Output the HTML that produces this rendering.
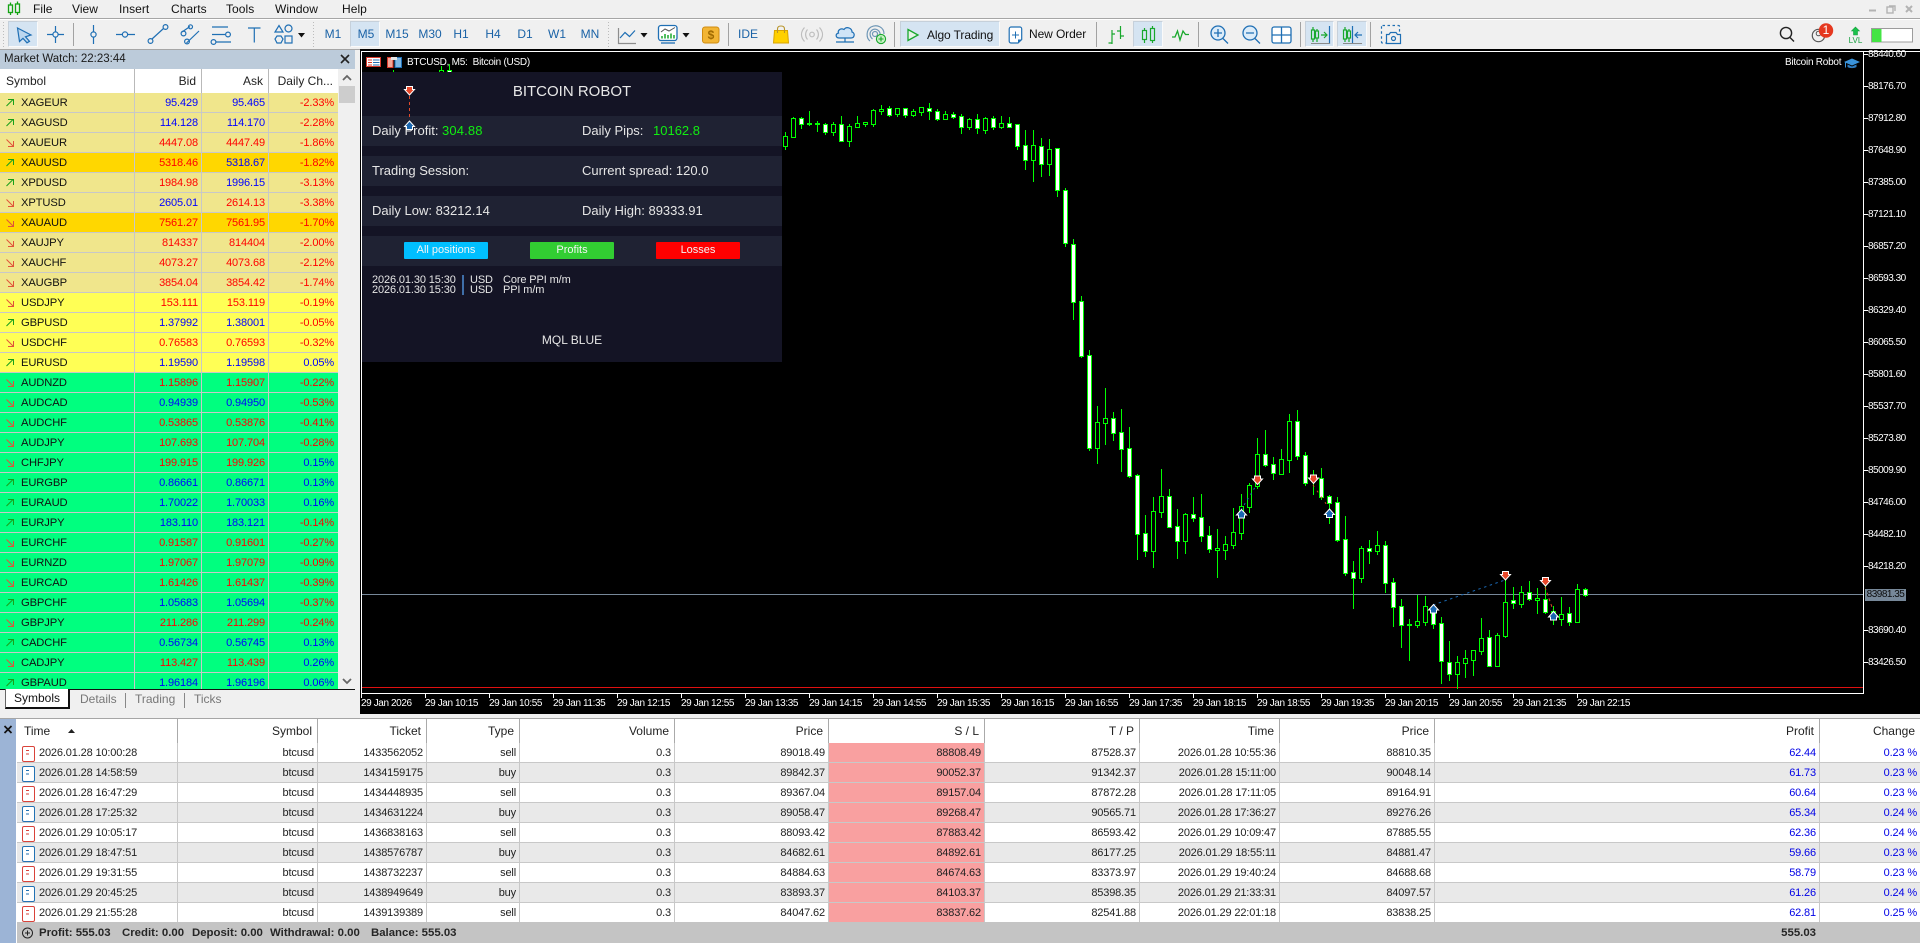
<!DOCTYPE html>
<html>
<head>
<meta charset="utf-8">
<title>MT5 Bitcoin Robot</title>
<style>
html,body{margin:0;padding:0;background:#f0f0f0}
body{position:relative;width:1920px;height:943px;overflow:hidden;font-family:"Liberation Sans",Arial,sans-serif;color:#111}
div,span{box-sizing:border-box}
.abs,.t,.tf{position:absolute;white-space:nowrap}
svg{position:absolute;left:0;top:0;display:block}
.t{font-size:12px;line-height:16px}
.menu{top:1px;font-size:12px;letter-spacing:.05px;color:#111}
.tf{top:26px;width:30px;height:16px;text-align:center;font-size:12px;line-height:16px;color:#1a62a6}
.sel{position:absolute;background:#d5e4f2;border:1px solid #c6d0da;border-right-color:#fafafa;border-bottom-color:#fafafa}
.mh{position:absolute;top:69px;height:24px;background:#fff;border-right:1px solid #b9b9b9;font-size:12px;line-height:24px;color:#222}
.m{position:absolute;left:0;width:338px;height:20px;display:flex;font-size:11px;line-height:21px;letter-spacing:-.12px;border-bottom:1px solid #c8c8c8}
.m span{display:block;height:19px;border-right:1px solid #c8c8c8;text-align:right;padding-right:3px;width:67px;color:#00f}
.m span:nth-of-type(1){width:135px;text-align:left;padding-left:21px;color:#111;font-size:11.2px}
.m span:nth-of-type(4){width:69px;border-right:0;padding-right:4px}
.m span.r{color:#f00}
.k{background:#f0e68c}.g{background:#ffd700}.y{background:#ffff55}.s{background:#00ff7f}
.m svg{width:20px;height:20px;z-index:2}
.ax{position:absolute;color:#fff;font-size:10px;line-height:12px;white-space:nowrap}
.tx{top:698px;letter-spacing:-.4px}
.px{left:1868px;letter-spacing:-.5px}
.row{position:absolute;left:17px;width:1903px;height:20px;display:flex;font-size:11px;line-height:21px;letter-spacing:-.15px;color:#222;border-bottom:1px solid #c8c8c8}
.row span,.hd span{display:block;border-right:1px solid #c8c8c8;text-align:right;padding-right:3px;height:19px}
.hd{position:absolute;left:17px;top:719px;width:1903px;height:24px;display:flex;background:#fff;font-size:12px;line-height:24px;color:#222}
.hd span{height:24px;border-right:1px solid #aaa;padding-right:5px}
.c1{width:161px}.c2{width:140px}.c3{width:109px}.c4{width:93px}.c5{width:155px}.c6{width:154px}.c7{width:156px}.c8{width:155px}.c9{width:140px}.c10{width:155px}.c11{width:385px}.c12{width:100px}
.row span.c12{border-right:0}.hd span.c12{border-right:0}
.row span.c1{text-align:left;padding-left:22px}
.hd span.c1{text-align:left;padding-left:7px}
.row span.c6{background:#f9a0a0}
.row span.c11,.row span.c12{color:#0000e6}
.alt{background:#e9e9e9}.wh{background:#fff}
.ic{position:absolute;left:5px;top:3px;width:11px;height:14px;border:1.2px solid #d9433a;border-radius:2px;background:#fff}
.ic.bu{border-color:#2272b4}
.ic:before{content:"";position:absolute;left:3px;top:2.5px;width:3px;height:1.5px;background:currentColor;box-shadow:0 3.5px 0 currentColor}
.ic.se{color:#d9433a}.ic.bu{color:#2272b4}
.sm{position:absolute;top:923px;font-size:11.4px;font-weight:bold;line-height:20px;color:#262626;white-space:nowrap}
.pl{position:absolute;color:#e6e6e6;font-size:13px;line-height:18px;white-space:nowrap}
.bar{position:absolute;left:362px;width:420px;height:30px;background:#1f2233}
.btn{position:absolute;top:242px;width:84px;height:17px;border-radius:1px;text-align:center;font-size:11px;line-height:17px;color:#f4f4f4}
.nw{position:absolute;color:#e6e6e6;font-size:11px;line-height:13px;letter-spacing:-.12px;white-space:nowrap}
</style>
</head>
<body>

<!-- top menu -->
<div class="abs" style="left:0;top:0;width:1920px;height:18px;background:#f0f0f0"></div>
<div class="abs" style="left:0;top:18px;width:1920px;height:1px;background:#a6a6a6"></div>
<div class="abs" style="left:0;top:19px;width:1920px;height:1px;background:#fff"></div>
<div class="t menu" style="left:33px">File</div>
<div class="t menu" style="left:72px">View</div>
<div class="t menu" style="left:119px">Insert</div>
<div class="t menu" style="left:171px">Charts</div>
<div class="t menu" style="left:226px">Tools</div>
<div class="t menu" style="left:275px">Window</div>
<div class="t menu" style="left:342px">Help</div>

<!-- toolbar -->
<div class="sel" style="left:8px;top:21px;width:30px;height:26px"></div>
<div class="sel" style="left:350px;top:21px;width:30px;height:26px"></div>
<div class="sel" style="left:900px;top:21px;width:100px;height:26px"></div>
<div class="sel" style="left:1133px;top:21px;width:30px;height:26px"></div>
<div class="sel" style="left:1305px;top:21px;width:29px;height:26px"></div>
<div class="sel" style="left:1337px;top:21px;width:30px;height:26px"></div>

<div class="tf" style="left:318px">M1</div>
<div class="tf" style="left:351px">M5</div>
<div class="tf" style="left:382px">M15</div>
<div class="tf" style="left:415px">M30</div>
<div class="tf" style="left:446px">H1</div>
<div class="tf" style="left:478px">H4</div>
<div class="tf" style="left:510px">D1</div>
<div class="tf" style="left:542px">W1</div>
<div class="tf" style="left:575px">MN</div>
<div class="tf" style="left:733px">IDE</div>
<div class="t" style="left:927px;top:27px;color:#111;letter-spacing:-.1px">Algo Trading</div>
<div class="t" style="left:1029px;top:26px;color:#111;letter-spacing:-.1px">New Order</div>

<svg width="1920" height="50" viewBox="0 0 1920 50" fill="none" style="z-index:3">
  <!-- logo -->
  <g stroke="#12a312" stroke-width="1.3"><path d="M10.5 2.5V15M17.5 1.5V15"/><rect x="8.5" y="5" width="4" height="7.5" fill="#f0f0f0"/><rect x="15.5" y="4" width="4" height="8.5" fill="#f0f0f0"/></g>
  <!-- grip / separators -->
  <g stroke="#bcbcbc" stroke-width="1" stroke-dasharray="1 2"><path d="M3.5 22V47M313.5 22V47M608.5 22V47"/></g>
  <g stroke="#a2a2a2" stroke-width="1"><path d="M73.5 23V46M728.5 23V46M894.5 22V47M1096.5 22V47M1198.5 22V47M1300.5 22V47M1370.5 22V47"/></g>
  <!-- cursor -->
  <path d="M17.5 28L31 35L25.5 36.8L29.5 41.3L27 42.8L23 38.3L19.5 41.5Z" fill="#bcd7ef" stroke="#1f6fb4" stroke-width="1.2"/>
  <!-- crosshair etc -->
  <g stroke="#1f6fb4" stroke-width="1.2">
    <path d="M47 34.5H52.5M58.5 34.5H64M55.5 26V31.5M55.5 37.5V43"/><circle cx="55.5" cy="34.5" r="2.6"/>
    <path d="M93.5 25V31.5M93.5 37V44"/><circle cx="93.5" cy="34.5" r="2.6"/>
    <path d="M116 34.5H122.3M127.7 34.5H135"/><circle cx="125" cy="34.5" r="2.6"/>
    <path d="M152 39L163.5 28.5"/><circle cx="150.5" cy="41" r="2.4"/><circle cx="165.5" cy="27" r="2.4"/>
    <path d="M182 32L190 26.5M186.5 43L199 31"/><circle cx="183.5" cy="33.5" r="2.4"/><circle cx="187" cy="41.5" r="2.4"/><circle cx="190.5" cy="26.8" r="2"/>
    <path d="M212 27H228M212 34.5H225M216 42H231"/><circle cx="228" cy="34.5" r="2.4"/><circle cx="213.5" cy="42" r="2.4"/>
    <path d="M248 28H260.5M254.3 28V42.5"/>
    <path d="M275 32H283L279 25.5Z"/><circle cx="288.5" cy="28.5" r="3.5"/><path d="M277 36H281L283 39L281 43H277L275 39Z"/><rect x="285" y="36" width="7" height="7"/>
  </g>
  <g fill="#111">
    <path d="M298 33H305L301.5 37.5Z"/><path d="M640.5 33H647.5L644 37.5Z"/><path d="M682.5 33H689.5L686 37.5Z"/>
  </g>
  <!-- line chart type -->
  <g stroke-width="1.2"><path d="M618.5 28V43.5H636" stroke="#8d8d8d"/><path d="M620 38L625 32.5L629.5 36.5L635 30.5" stroke="#1f6fb4"/></g>
  <!-- indicators -->
  <rect x="658.5" y="25.5" width="18.5" height="15" rx="2.5" stroke="#1f6fb4" stroke-width="1.3" fill="#fff"/>
  <path d="M661 43H675" stroke="#1f6fb4" stroke-width="1.3"/>
  <path d="M661 32L665 29L669 31L675 27.5" stroke="#555" stroke-width="1"/>
  <path d="M662 38.5V36M665 38.5V34M668 38.5V35M671 38.5V33.5M674 38.5V35" stroke="#18a82c" stroke-width="1.5"/>
  <!-- dollar -->
  <rect x="702.5" y="27" width="16.5" height="16" rx="2.5" fill="#f2b534" stroke="#d08c10"/>
  <!-- bag -->
  <path d="M774.5 30.5H787.5L788.5 43H773.5Z" fill="#ffd000" stroke="#d9a400"/>
  <path d="M777.5 33V29C777.5 27 779 26 781 26C783 26 784.5 27 784.5 29V33" stroke="#b8952c" stroke-width="1.1"/>
  <!-- signal -->
  <g stroke="#bdbdbd" stroke-width="1.2"><circle cx="812" cy="34.5" r="2.3"/><path d="M807.5 29.5C805 32.5 805 36.5 807.5 39.5M816.5 29.5C819 32.5 819 36.5 816.5 39.5M804.5 27.5C800.5 32 800.5 37 804.5 41.5M819.5 27.5C823.5 32 823.5 37 819.5 41.5"/></g>
  <!-- cloud -->
  <g stroke="#1f6fb4" stroke-width="1.2"><path d="M839.5 38H851C854.5 38 855.5 33 852 32C852 28 846.5 26 844 29.5C840 27.5 837.5 31 838.5 33C835 34 835.5 38 839.5 38Z" fill="#cfe4f7"/><path d="M845 38V42M836 42H854"/></g>
  <!-- vps -->
  <g stroke="#6f97b6" stroke-width="1.2"><circle cx="875" cy="34" r="2.5"/><path d="M880 36C881 30 875 27.5 871.5 30.5C869 33 870 37 872.5 39M884 34C884 27 877 24 871 27C866 30 866 38 870 41"/></g>
  <circle cx="881" cy="39" r="4.6" fill="#c8f0c4" stroke="#18a82c" stroke-width="1.1"/><path d="M878.5 39H883.5M881 36.5V41.5" stroke="#18a82c" stroke-width="1.1"/>
  <!-- algo / new order -->
  <path d="M908 29.5L918 35L908 40.5Z" stroke="#18a82c" stroke-width="1.3" fill="#e6f3e6"/>
  <path d="M1018 43H1011C1009.8 43 1009.2 42 1009.2 41V29C1009.2 28 1010 27 1011 27H1020C1021 27 1021.7 28 1021.7 29V39.5L1018 43Z" stroke="#1f6fb4" stroke-width="1.2" fill="#fff"/>
  <path d="M1012 35H1019M1015.5 31.5V38.5" stroke="#1f6fb4" stroke-width="1"/>
  <path d="M1018 43V39.5H1021.7" fill="#1f6fb4"/>
  <!-- bars -->
  <g stroke="#18a82c" stroke-width="1.2"><path d="M1112 30V44M1108.5 43H1112M1112 34H1115M1120.5 26V39M1117 31H1120.5M1120.5 36H1124"/></g>
  <!-- candles -->
  <g stroke="#18a82c" stroke-width="1.2"><path d="M1144.5 28V43M1152.5 26V43"/><rect x="1142.5" y="30.5" width="4" height="9" fill="#d5e4f2"/><rect x="1150.5" y="28.5" width="4" height="12" fill="#d5e4f2"/></g>
  <!-- line -->
  <path d="M1172 37H1175L1177.5 31L1180 40L1183 31L1185.5 34.5H1189" stroke="#18a82c" stroke-width="1.3"/>
  <!-- zoom -->
  <g stroke="#1f6fb4" stroke-width="1.3"><circle cx="1218" cy="33" r="7" fill="#dcecf9"/><path d="M1214 33H1222M1218 29V37M1223 38.5L1228 43.5"/><circle cx="1250" cy="33" r="7" fill="#dcecf9"/><path d="M1246 33H1254M1255 38.5L1260 43.5"/></g>
  <!-- grid -->
  <g stroke="#1f6fb4" stroke-width="1.3"><rect x="1272" y="27" width="19" height="16" rx="2" fill="#fff"/><path d="M1281.5 27V43M1272 35H1291"/></g>
  <!-- autoscroll -->
  <g stroke="#18a82c" stroke-width="1.2"><path d="M1313 27V42M1317 29V42"/><rect x="1311.5" y="30" width="3" height="9" fill="#d5e4f2"/><rect x="1315.5" y="31" width="3" height="7" fill="#d5e4f2"/><path d="M1321 35H1327M1324 32L1327 35L1324 38"/></g>
  <path d="M1329.5 26V44" stroke="#1f6fb4" stroke-width="1.2"/>
  <path d="M1311 43.5H1330" stroke="#8a8a8a"/>
  <g stroke="#18a82c" stroke-width="1.2"><path d="M1345 27V42M1349 29V42"/><rect x="1343.5" y="30" width="3" height="9" fill="#d5e4f2"/><rect x="1347.5" y="31" width="3" height="7" fill="#d5e4f2"/></g>
  <path d="M1352.5 26V44M1355 35H1362M1358 32L1355 35L1358 38" stroke="#1f6fb4" stroke-width="1.2"/>
  <path d="M1343 43.5H1362" stroke="#8a8a8a"/>
  <!-- screenshot -->
  <rect x="1381.5" y="25.5" width="18" height="17.5" rx="1" stroke="#1f6fb4" stroke-width="1.2" stroke-dasharray="2.5 2.5"/>
  <path d="M1386.500 34.500H1389L1390.500 32.500H1396L1397.500 34.500H1400.500V43.500H1386.500Z" fill="#f0f0f0" stroke="#1f6fb4" stroke-width="1.2"/>
  <circle cx="1393.500" cy="38.500" r="2" stroke="#1f6fb4" stroke-width="1.2"/>
  <!-- right icons -->
  <g stroke="#222" stroke-width="1.4"><circle cx="1786" cy="33" r="5.6"/><path d="M1790 37.5L1794 41.5"/></g>
  <circle cx="1818.5" cy="35.5" r="6.2" stroke="#555" stroke-width="1.2"/><circle cx="1818.5" cy="33.5" r="2.3" stroke="#555"/>
  <circle cx="1826" cy="30.5" r="7.2" fill="#e5381f"/>
  <path d="M1855.5 27L1851.5 31H1853.5V35H1857.5V31H1859.5Z" fill="#19c24a" stroke="#19a040" stroke-width=".6"/>
  <rect x="1871.5" y="28.5" width="41" height="13.5" fill="#fff" stroke="#9c9c9c"/>
  <rect x="1872" y="29" width="9.5" height="13" fill="#44e444"/>
  <!-- window buttons -->
  <g stroke="#b3b3b3" stroke-width="2"><path d="M1869 10.5H1876"/></g>
  <g stroke="#b3b3b3" stroke-width="1.4"><rect x="1887" y="7" width="6" height="6"/><path d="M1889 6H1895V11"/><path d="M1906 6L1912 12M1912 6L1906 12" stroke-width="2"/></g>
</svg>
<div class="abs" style="left:1822px;top:23px;width:8px;font-size:12px;line-height:15px;color:#fff;text-align:center;z-index:4">1</div>
<div class="abs" style="left:1846px;top:36px;width:19px;font-size:8px;line-height:9px;color:#19a040;text-align:center;z-index:4">LVL</div>
<div class="abs" style="left:703px;top:27px;width:16px;text-align:center;font-size:12px;font-weight:bold;line-height:16px;color:#a06a00;z-index:4">$</div>

<div class="abs" style="left:0;top:49px;width:360px;height:1px;background:#a6a6a6"></div>

<!-- market watch -->
<div class="abs" style="left:0;top:50px;width:355px;height:19px;background:#bccbda;font-size:11.5px;line-height:18px;padding-left:4px;color:#1a1a1a">Market Watch: 22:23:44</div>
<svg width="360" height="70" viewBox="0 0 360 70" fill="none" style="z-index:3;top:0"><path d="M341 55L349 63M349 55L341 63" stroke="#222" stroke-width="1.6"/></svg>
<div class="mh" style="left:0;width:135px;padding-left:6px">Symbol</div>
<div class="mh" style="left:135px;width:67px;text-align:right;padding-right:5px">Bid</div>
<div class="mh" style="left:202px;width:67px;text-align:right;padding-right:5px">Ask</div>
<div class="mh" style="left:269px;width:69px;text-align:right;padding-right:5px;border-right:0;overflow:hidden">Daily Ch...</div>

<div class="abs" style="left:0;top:93px;width:338px;height:596px;overflow:hidden;background:#fff">
<svg width="0" height="0" style="position:absolute"><defs>
<g id="u" fill="none" stroke="#1aa01a" stroke-width="1"><path d="M6.5 13L13 6.5M8 6.5H13.5V12"/></g>
<g id="d" fill="none" stroke="#e0533a" stroke-width="1"><path d="M6.5 6.5L13 13M13.5 8V13.5H8"/></g>
</defs></svg>
<div class="m k" style="top:0"><svg><use href="#u"/></svg><span>XAGEUR</span><span>95.429</span><span>95.465</span><span class="r">-2.33%</span></div>
<div class="m k" style="top:20px"><svg><use href="#u"/></svg><span>XAGUSD</span><span>114.128</span><span>114.170</span><span class="r">-2.28%</span></div>
<div class="m k" style="top:40px"><svg><use href="#d"/></svg><span>XAUEUR</span><span class="r">4447.08</span><span class="r">4447.49</span><span class="r">-1.86%</span></div>
<div class="m g" style="top:60px"><svg><use href="#u"/></svg><span>XAUUSD</span><span class="r">5318.46</span><span>5318.67</span><span class="r">-1.82%</span></div>
<div class="m k" style="top:80px"><svg><use href="#u"/></svg><span>XPDUSD</span><span class="r">1984.98</span><span>1996.15</span><span class="r">-3.13%</span></div>
<div class="m k" style="top:100px"><svg><use href="#d"/></svg><span>XPTUSD</span><span>2605.01</span><span class="r">2614.13</span><span class="r">-3.38%</span></div>
<div class="m g" style="top:120px"><svg><use href="#d"/></svg><span>XAUAUD</span><span class="r">7561.27</span><span class="r">7561.95</span><span class="r">-1.70%</span></div>
<div class="m k" style="top:140px"><svg><use href="#d"/></svg><span>XAUJPY</span><span class="r">814337</span><span class="r">814404</span><span class="r">-2.00%</span></div>
<div class="m k" style="top:160px"><svg><use href="#d"/></svg><span>XAUCHF</span><span class="r">4073.27</span><span class="r">4073.68</span><span class="r">-2.12%</span></div>
<div class="m k" style="top:180px"><svg><use href="#d"/></svg><span>XAUGBP</span><span class="r">3854.04</span><span class="r">3854.42</span><span class="r">-1.74%</span></div>
<div class="m y" style="top:200px"><svg><use href="#d"/></svg><span>USDJPY</span><span class="r">153.111</span><span class="r">153.119</span><span class="r">-0.19%</span></div>
<div class="m y" style="top:220px"><svg><use href="#u"/></svg><span>GBPUSD</span><span>1.37992</span><span>1.38001</span><span class="r">-0.05%</span></div>
<div class="m y" style="top:240px"><svg><use href="#d"/></svg><span>USDCHF</span><span class="r">0.76583</span><span class="r">0.76593</span><span class="r">-0.32%</span></div>
<div class="m y" style="top:260px"><svg><use href="#u"/></svg><span>EURUSD</span><span>1.19590</span><span>1.19598</span><span>0.05%</span></div>
<div class="m s" style="top:280px"><svg><use href="#d"/></svg><span>AUDNZD</span><span class="r">1.15896</span><span class="r">1.15907</span><span class="r">-0.22%</span></div>
<div class="m s" style="top:300px"><svg><use href="#d"/></svg><span>AUDCAD</span><span>0.94939</span><span>0.94950</span><span class="r">-0.53%</span></div>
<div class="m s" style="top:320px"><svg><use href="#d"/></svg><span>AUDCHF</span><span class="r">0.53865</span><span class="r">0.53876</span><span class="r">-0.41%</span></div>
<div class="m s" style="top:340px"><svg><use href="#d"/></svg><span>AUDJPY</span><span class="r">107.693</span><span class="r">107.704</span><span class="r">-0.28%</span></div>
<div class="m s" style="top:360px"><svg><use href="#d"/></svg><span>CHFJPY</span><span class="r">199.915</span><span class="r">199.926</span><span>0.15%</span></div>
<div class="m s" style="top:380px"><svg><use href="#u"/></svg><span>EURGBP</span><span>0.86661</span><span>0.86671</span><span>0.13%</span></div>
<div class="m s" style="top:400px"><svg><use href="#u"/></svg><span>EURAUD</span><span>1.70022</span><span>1.70033</span><span>0.16%</span></div>
<div class="m s" style="top:420px"><svg><use href="#u"/></svg><span>EURJPY</span><span>183.110</span><span>183.121</span><span class="r">-0.14%</span></div>
<div class="m s" style="top:440px"><svg><use href="#d"/></svg><span>EURCHF</span><span class="r">0.91587</span><span class="r">0.91601</span><span class="r">-0.27%</span></div>
<div class="m s" style="top:460px"><svg><use href="#d"/></svg><span>EURNZD</span><span class="r">1.97067</span><span class="r">1.97079</span><span class="r">-0.09%</span></div>
<div class="m s" style="top:480px"><svg><use href="#d"/></svg><span>EURCAD</span><span class="r">1.61426</span><span class="r">1.61437</span><span class="r">-0.39%</span></div>
<div class="m s" style="top:500px"><svg><use href="#u"/></svg><span>GBPCHF</span><span>1.05683</span><span>1.05694</span><span class="r">-0.37%</span></div>
<div class="m s" style="top:520px"><svg><use href="#d"/></svg><span>GBPJPY</span><span class="r">211.286</span><span class="r">211.299</span><span class="r">-0.24%</span></div>
<div class="m s" style="top:540px"><svg><use href="#u"/></svg><span>CADCHF</span><span>0.56734</span><span>0.56745</span><span>0.13%</span></div>
<div class="m s" style="top:560px"><svg><use href="#d"/></svg><span>CADJPY</span><span class="r">113.427</span><span class="r">113.439</span><span>0.26%</span></div>
<div class="m s" style="top:580px"><svg><use href="#u"/></svg><span>GBPAUD</span><span>1.96184</span><span>1.96196</span><span>0.06%</span></div>
</div>

<!-- scrollbar -->
<div class="abs" style="left:339px;top:86px;width:16px;height:17px;background:#cdcdcd"></div>
<svg width="360" height="700" viewBox="0 0 360 700" fill="none" style="z-index:2"><path d="M343 80L347 76L351 80M343 679L347 683L351 679" stroke="#666" stroke-width="1.8"/></svg>

<!-- tabs -->
<div class="abs" style="left:0;top:689px;width:355px;height:1px;background:#111"></div>
<div class="abs" style="left:5px;top:689px;width:65px;height:20px;background:#fff;border:1px solid #111;border-top:0;border-bottom-width:2px;border-right-width:2px;border-left-color:#666;font-size:12px;line-height:18px;text-align:center;color:#111">Symbols</div>
<div class="t" style="left:80px;top:691px;color:#777">Details</div>
<div class="abs" style="left:125px;top:693px;width:1px;height:15px;background:#888"></div>
<div class="t" style="left:135px;top:691px;color:#777">Trading</div>
<div class="abs" style="left:184px;top:693px;width:1px;height:15px;background:#888"></div>
<div class="t" style="left:194px;top:691px;color:#777">Ticks</div>

<!-- chart -->
<div class="abs" style="left:360px;top:49px;width:1560px;height:665px;background:#000"></div>
<div class="abs" style="left:361px;top:51px;width:1559px;height:1px;background:#fff"></div>
<div class="abs" style="left:361px;top:51px;width:1px;height:643px;background:#fff"></div>
<div class="abs" style="left:1863px;top:51px;width:1px;height:643px;background:#fff"></div>
<div class="abs" style="left:361px;top:693px;width:1503px;height:1px;background:#fff"></div>
<div class="abs" style="left:362px;top:687px;width:1501px;height:1px;background:#e01010"></div>
<div class="abs" style="left:362px;top:594px;width:1501px;height:1px;background:#778899"></div>

<svg width="1920" height="943" viewBox="0 0 1920 943" fill="none" shape-rendering="crispEdges" style="z-index:1">
<path stroke="#00ff00" stroke-width="1" d="M393.5 70V72M441.5 66V72M449.5 64V72M785.5 132V150M793.5 117V138M801.5 117V129M809.5 111V126M817.5 121V132M825.5 123V135M833.5 122V136M841.5 116V142M849.5 124V147M857.5 116V128M865.5 122V127M873.5 109V127M881.5 105V115M889.5 106V117M897.5 108V117M905.5 108V118M913.5 109V117M921.5 107V116M929.5 103V120M937.5 109V121M945.5 111V120M953.5 112V119M961.5 114V134M969.5 118V130M977.5 114V134M985.5 117V134M993.5 116V130M1001.5 116V129M1009.5 117V128M1017.5 124V150M1025.5 130V170M1033.5 130V182M1041.5 138V177M1049.5 139V176M1057.5 148V197M1065.5 188V247M1073.5 239V320M1081.5 296V358M1089.5 350V451M1097.5 406V464M1105.5 388V445M1113.5 412V441M1121.5 409V472M1129.5 427V478M1137.5 474V560M1145.5 515V557M1153.5 497V568M1161.5 469V518M1169.5 489V528M1177.5 509V559M1185.5 513V554M1193.5 497V522M1201.5 494V542M1209.5 526V553M1217.5 529V578M1225.5 536V560M1233.5 508V549M1241.5 494V540M1249.5 483V513M1257.5 438V489M1265.5 430V467M1273.5 457V480M1281.5 449V475M1289.5 414V473M1297.5 410V460M1305.5 452V486M1313.5 470V495M1321.5 468V500M1329.5 495V524M1337.5 497V542M1345.5 516V576M1353.5 561V609M1361.5 546V583M1369.5 540V564M1377.5 531V555M1385.5 541V593M1393.5 578V627M1401.5 599V648M1409.5 619V661M1417.5 595V628M1425.5 596V626M1433.5 606V629M1441.5 617V684M1449.5 641V681M1457.5 656V689M1465.5 650V678M1473.5 650V676M1481.5 618V655M1489.5 630V667M1497.5 633V667M1505.5 580V638M1513.5 587V609M1521.5 586V608M1529.5 581V601M1537.5 588V614M1545.5 585V614M1553.5 606V625M1561.5 597V626M1569.5 607V626M1577.5 584V623M1585.5 588V597"/>
<path stroke="#00ff00" fill="#000" d="M439.5 70.500h4v3h-4zM783.5 136.500h4v10h-4zM791.500 118.500h4v19h-4zM807.500 123.500h4v1h-4zM815.500 123.500h4v1h-4zM831.500 124.500h4v8h-4zM847.500 126.500h4v15h-4zM855.500 123.500h4v4h-4zM863.500 122.500h4v2h-4zM871.500 110.500h4v14h-4zM879.500 109.500h4v2h-4zM895.500 108.500h4v6h-4zM911.500 111.500h4v4h-4zM919.500 107.500h4v5h-4zM943.500 114.500h4v5h-4zM967.500 119.500h4v8h-4zM983.500 118.500h4v12h-4zM999.500 123.500h4v4h-4zM1031.500 145.500h4v15h-4zM1047.500 149.500h4v15h-4zM1095.500 422.500h4v26h-4zM1103.500 418.500h4v5h-4zM1151.500 511.500h4v40h-4zM1159.500 496.500h4v16h-4zM1183.500 514.500h4v27h-4zM1215.500 548.500h4v2h-4zM1223.500 544.500h4v6h-4zM1231.500 532.500h4v13h-4zM1239.500 506.500h4v27h-4zM1247.500 485.500h4v22h-4zM1255.500 454.500h4v32h-4zM1279.500 459.500h4v15h-4zM1287.500 421.500h4v39h-4zM1311.500 478.500h4v2h-4zM1359.500 548.500h4v30h-4zM1375.500 545.500h4v6h-4zM1407.500 624.500h4v1h-4zM1415.500 621.500h4v4h-4zM1423.500 606.500h4v16h-4zM1455.500 662.500h4v12h-4zM1463.500 658.500h4v5h-4zM1471.500 650.500h4v10h-4zM1479.500 638.500h4v13h-4zM1495.500 635.500h4v31h-4zM1503.500 602.500h4v34h-4zM1519.500 592.500h4v12h-4zM1535.500 598.500h4v2h-4zM1559.500 614.500h4v5h-4zM1575.500 589.500h4v33h-4z"/>
<path stroke="#00ff00" fill="#fff" d="M447.500 70.500h4v3h-4zM799.500 118.500h4v6h-4zM823.500 124.500h4v8h-4zM839.500 124.500h4v17h-4zM887.500 108.500h4v7h-4zM903.500 108.500h4v7h-4zM927.500 108.500h4v3h-4zM935.500 111.500h4v8h-4zM951.500 114.500h4v3h-4zM959.500 116.500h4v11h-4zM975.500 119.500h4v9h-4zM991.500 118.500h4v9h-4zM1007.500 123.500h4v4h-4zM1015.500 124.500h4v22h-4zM1023.500 145.500h4v15h-4zM1039.500 146.500h4v18h-4zM1055.500 148.500h4v42h-4zM1063.500 190.500h4v53h-4zM1071.500 244.500h4v58h-4zM1079.500 301.500h4v55h-4zM1087.500 355.500h4v93h-4zM1111.500 418.500h4v15h-4zM1119.500 432.500h4v17h-4zM1127.500 448.500h4v28h-4zM1135.500 475.500h4v59h-4zM1143.500 533.500h4v18h-4zM1167.500 496.500h4v31h-4zM1175.500 526.500h4v15h-4zM1191.500 514.500h4v4h-4zM1199.500 517.500h4v19h-4zM1207.500 535.500h4v14h-4zM1263.500 454.500h4v11h-4zM1271.500 464.500h4v9h-4zM1295.500 421.500h4v35h-4zM1303.500 455.500h4v28h-4zM1319.500 478.500h4v19h-4zM1327.500 496.500h4v7h-4zM1335.500 502.500h4v38h-4zM1343.500 539.500h4v34h-4zM1351.500 572.500h4v6h-4zM1367.500 548.500h4v3h-4zM1383.500 545.500h4v38h-4zM1391.500 582.500h4v25h-4zM1399.500 606.500h4v19h-4zM1431.500 610.500h4v14h-4zM1439.500 623.500h4v38h-4zM1447.500 662.500h4v12h-4zM1487.500 637.500h4v29h-4zM1511.500 600.500h4v3h-4zM1527.500 592.500h4v7h-4zM1543.500 599.500h4v13h-4zM1551.500 611.500h4v4h-4zM1567.500 613.500h4v9h-4zM1583.500 589.500h4v6h-4z"/>
</svg>

<!-- panel -->
<div class="abs" style="left:362px;top:72px;width:420px;height:290px;background:#141425;z-index:1"></div>
<div style="position:absolute;left:0;top:0;z-index:2">
<div class="bar" style="top:116px"></div>
<div class="bar" style="top:156px"></div>
<div class="bar" style="top:196px"></div>
<div class="bar" style="top:236px"></div>
<div class="abs" style="left:362px;top:83px;width:420px;text-align:center;font-size:15px;line-height:18px;color:#e8e8e8">BITCOIN ROBOT</div>
<div class="pl" style="left:372px;top:122px">Daily Profit:</div>
<div class="pl" style="left:442px;top:122px;color:#11ee11;letter-spacing:.15px">304.88</div>
<div class="pl" style="left:582px;top:122px">Daily Pips:</div>
<div class="pl" style="left:653px;top:122px;color:#11ee11">10162.8</div>
<div class="pl" style="left:372px;top:162px">Trading Session:</div>
<div class="pl" style="left:582px;top:162px">Current spread: 120.0</div>
<div class="pl" style="left:372px;top:202px">Daily Low: 83212.14</div>
<div class="pl" style="left:582px;top:202px">Daily High: 89333.91</div>
<div class="btn" style="left:404px;background:#00bfff">All positions</div>
<div class="btn" style="left:530px;background:#32cd32">Profits</div>
<div class="btn" style="left:656px;background:#ff0000">Losses</div>
<div class="nw" style="left:372px;top:274px">2026.01.30 15:30</div>
<div class="nw" style="left:372px;top:284px">2026.01.30 15:30</div>
<div class="abs" style="left:462px;top:275px;width:2px;height:20px;background:#3f6fa8"></div>
<div class="nw" style="left:470px;top:274px">USD</div>
<div class="nw" style="left:470px;top:284px">USD</div>
<div class="nw" style="left:503px;top:274px">Core PPI m/m</div>
<div class="nw" style="left:503px;top:284px">PPI m/m</div>
<div class="abs" style="left:362px;top:332px;width:420px;text-align:center;font-size:12px;line-height:16px;color:#e6e6e6">MQL BLUE</div>
</div>

<!-- chart labels -->
<div class="ax" style="left:407px;top:57px;letter-spacing:-.25px;z-index:3">BTCUSD, M5:&nbsp; Bitcoin (USD)</div>
<div class="ax" style="left:1785px;top:57px;letter-spacing:-.25px;z-index:3">Bitcoin Robot</div>

<div class="ax px" style="top:49px">88440.60</div>
<div class="ax px" style="top:81px">88176.70</div>
<div class="ax px" style="top:113px">87912.80</div>
<div class="ax px" style="top:145px">87648.90</div>
<div class="ax px" style="top:177px">87385.00</div>
<div class="ax px" style="top:209px">87121.10</div>
<div class="ax px" style="top:241px">86857.20</div>
<div class="ax px" style="top:273px">86593.30</div>
<div class="ax px" style="top:305px">86329.40</div>
<div class="ax px" style="top:337px">86065.50</div>
<div class="ax px" style="top:369px">85801.60</div>
<div class="ax px" style="top:401px">85537.70</div>
<div class="ax px" style="top:433px">85273.80</div>
<div class="ax px" style="top:465px">85009.90</div>
<div class="ax px" style="top:497px">84746.00</div>
<div class="ax px" style="top:529px">84482.10</div>
<div class="ax px" style="top:561px">84218.20</div>
<div class="ax px" style="top:593px">83954.30</div>
<div class="ax px" style="top:625px">83690.40</div>
<div class="ax px" style="top:657px">83426.50</div>
<div class="abs" style="left:1865px;top:589px;width:41px;height:12px;background:#778899;color:#0c0c0c;font-size:10px;line-height:12px;letter-spacing:-.5px;text-align:center">83981.35</div>

<div class="ax tx" style="left:361px">29 Jan 2026</div>
<div class="ax tx" style="left:425px">29 Jan 10:15</div>
<div class="ax tx" style="left:489px">29 Jan 10:55</div>
<div class="ax tx" style="left:553px">29 Jan 11:35</div>
<div class="ax tx" style="left:617px">29 Jan 12:15</div>
<div class="ax tx" style="left:681px">29 Jan 12:55</div>
<div class="ax tx" style="left:745px">29 Jan 13:35</div>
<div class="ax tx" style="left:809px">29 Jan 14:15</div>
<div class="ax tx" style="left:873px">29 Jan 14:55</div>
<div class="ax tx" style="left:937px">29 Jan 15:35</div>
<div class="ax tx" style="left:1001px">29 Jan 16:15</div>
<div class="ax tx" style="left:1065px">29 Jan 16:55</div>
<div class="ax tx" style="left:1129px">29 Jan 17:35</div>
<div class="ax tx" style="left:1193px">29 Jan 18:15</div>
<div class="ax tx" style="left:1257px">29 Jan 18:55</div>
<div class="ax tx" style="left:1321px">29 Jan 19:35</div>
<div class="ax tx" style="left:1385px">29 Jan 20:15</div>
<div class="ax tx" style="left:1449px">29 Jan 20:55</div>
<div class="ax tx" style="left:1513px">29 Jan 21:35</div>
<div class="ax tx" style="left:1577px">29 Jan 22:15</div>

<!-- overlay: ticks, arrows, chart icons -->
<svg width="1920" height="943" viewBox="0 0 1920 943" fill="none" style="z-index:3">
  <path stroke="#fff" shape-rendering="crispEdges" d="M361.500 693V698M425.500 693V698M489.500 693V698M553.500 693V698M617.500 693V698M681.500 693V698M745.500 693V698M809.500 693V698M873.500 693V698M937.500 693V698M1001.500 693V698M1065.500 693V698M1129.500 693V698M1193.500 693V698M1257.500 693V698M1321.500 693V698M1385.500 693V698M1449.500 693V698M1513.500 693V698M1577.500 693V698M1863 54.500H1868M1863 86.500H1868M1863 118.500H1868M1863 150.500H1868M1863 182.500H1868M1863 214.500H1868M1863 246.500H1868M1863 278.500H1868M1863 310.500H1868M1863 342.500H1868M1863 374.500H1868M1863 406.500H1868M1863 438.500H1868M1863 470.500H1868M1863 502.500H1868M1863 534.500H1868M1863 566.500H1868M1863 630.500H1868M1863 662.500H1868"/>
  <!-- trade lines -->
  <path d="M409.500 96V120" stroke="#e04a2c" stroke-dasharray="3 3"/>
  <path d="M1241 510L1257 484" stroke="#1a67b0" stroke-dasharray="2 4"/>
  <path d="M1313 485L1329 508" stroke="#e04a2c" stroke-dasharray="2 5"/>
  <path d="M1433 605L1505 580" stroke="#1a67b0" stroke-dasharray="2.500 3.500"/>
  <path d="M1545 587L1553 610" stroke="#e04a2c" stroke-dasharray="3 3"/>
  <!-- red down arrows -->
  <g fill="#e8482a" stroke="#fff" stroke-width="1">
    <path d="M406.500 86.500H412.500V89.500H414.500L409.500 95L404.500 89.500H406.500Z"/>
    <path d="M1254.500 476H1260.500V479H1262.500L1257.500 484.500L1252.500 479H1254.500Z"/>
    <path d="M1310.500 475H1316.500V478H1318.500L1313.500 483.500L1308.500 478H1310.500Z"/>
    <path d="M1502.500 571.500H1508.500V574.500H1510.500L1505.500 580L1500.500 574.500H1502.500Z"/>
    <path d="M1542.500 577.500H1548.500V580.500H1550.500L1545.500 586L1540.500 580.500H1542.500Z"/>
  </g>
  <!-- blue up arrows -->
  <g fill="#1a67b0" stroke="#fff" stroke-width="1">
    <path d="M409.500 121L414.500 126.500H412.500V129.500H406.500V126.500H404.500Z"/>
    <path d="M1241.500 509.500L1246.500 515H1244.500V518H1238.500V515H1236.500Z"/>
    <path d="M1329.500 509L1334.500 514.500H1332.500V517.500H1326.500V514.500H1324.500Z"/>
    <path d="M1433.500 604.500L1438.500 610H1436.500V613H1430.500V610H1428.500Z"/>
    <path d="M1553.500 611.500L1558.500 617H1556.500V620H1550.500V617H1548.500Z"/>
  </g>
  <!-- chart title icons -->
  <rect x="366.500" y="57.500" width="14" height="9" fill="#fff" stroke="#d8392b"/>
  <path d="M368 60H372M368 62.500H372M368 65H372" stroke="#d8392b"/><path d="M373 60H379.500M373 62.500H379.500M373 65H379.500" stroke="#1f6fb4"/>
  <path d="M387.500 57.500H393V67.500H387.500Z" fill="#f2a99a" stroke="#d8392b"/><path d="M395 57.500H401.500V67.500H395Z" fill="#7fb8e4" stroke="#1f6fb4"/><rect x="391" y="57" width="6" height="3" fill="#e6e6e6"/>
  <!-- hat -->
  <path d="M1844 62L1852 58.500L1860 62L1852 65.500Z" fill="#3a93da"/><path d="M1847.500 64.500V67C1850 68.500 1854 68.500 1856.500 67V64.500L1852 66.500Z" fill="#2e7cc0"/><path d="M1845.500 62.500V67.500" stroke="#3a93da"/>
</svg>

<!-- bottom panel -->
<div class="abs" style="left:0;top:714px;width:1920px;height:4px;background:#f0f0f0"></div>
<div class="abs" style="left:0;top:718px;width:1920px;height:1px;background:#a6a6a6"></div>
<div class="abs" style="left:0;top:719px;width:16px;height:224px;background:#9cb4d6"></div>
<div class="abs" style="left:16px;top:719px;width:1px;height:224px;background:#fff"></div>
<svg width="20" height="740" viewBox="0 0 20 740" fill="none" style="z-index:3"><path d="M4.500 726L11.500 733M11.500 726L4.500 733" stroke="#111" stroke-width="1.700"/></svg>

<div class="hd">
<span class="c1">Time</span><span class="c2">Symbol</span><span class="c3">Ticket</span><span class="c4">Type</span><span class="c5">Volume</span><span class="c6">Price</span><span class="c7">S / L</span><span class="c8">T / P</span><span class="c9">Time</span><span class="c10">Price</span><span class="c11">Profit</span><span class="c12">Change</span>
</div>
<svg width="90" height="740" viewBox="0 0 90 740" style="z-index:3"><path d="M68 733H75L71.500 729Z" fill="#222"/></svg>

<div class="row wh" style="top:743px"><i class="ic se"></i><span class="c1">2026.01.28 10:00:28</span><span class="c2">btcusd</span><span class="c3">1433562052</span><span class="c4">sell</span><span class="c5">0.3</span><span class="c6" style="background:transparent">89018.49</span><span class="c7" style="background:#f9a0a0">88808.49</span><span class="c8">87528.37</span><span class="c9">2026.01.28 10:55:36</span><span class="c10">88810.35</span><span class="c11">62.44</span><span class="c12">0.23 %</span></div>
<div class="row alt" style="top:763px"><i class="ic bu"></i><span class="c1">2026.01.28 14:58:59</span><span class="c2">btcusd</span><span class="c3">1434159175</span><span class="c4">buy</span><span class="c5">0.3</span><span class="c6" style="background:transparent">89842.37</span><span class="c7" style="background:#f9a0a0">90052.37</span><span class="c8">91342.37</span><span class="c9">2026.01.28 15:11:00</span><span class="c10">90048.14</span><span class="c11">61.73</span><span class="c12">0.23 %</span></div>
<div class="row wh" style="top:783px"><i class="ic se"></i><span class="c1">2026.01.28 16:47:29</span><span class="c2">btcusd</span><span class="c3">1434448935</span><span class="c4">sell</span><span class="c5">0.3</span><span class="c6" style="background:transparent">89367.04</span><span class="c7" style="background:#f9a0a0">89157.04</span><span class="c8">87872.28</span><span class="c9">2026.01.28 17:11:05</span><span class="c10">89164.91</span><span class="c11">60.64</span><span class="c12">0.23 %</span></div>
<div class="row alt" style="top:803px"><i class="ic bu"></i><span class="c1">2026.01.28 17:25:32</span><span class="c2">btcusd</span><span class="c3">1434631224</span><span class="c4">buy</span><span class="c5">0.3</span><span class="c6" style="background:transparent">89058.47</span><span class="c7" style="background:#f9a0a0">89268.47</span><span class="c8">90565.71</span><span class="c9">2026.01.28 17:36:27</span><span class="c10">89276.26</span><span class="c11">65.34</span><span class="c12">0.24 %</span></div>
<div class="row wh" style="top:823px"><i class="ic se"></i><span class="c1">2026.01.29 10:05:17</span><span class="c2">btcusd</span><span class="c3">1436838163</span><span class="c4">sell</span><span class="c5">0.3</span><span class="c6" style="background:transparent">88093.42</span><span class="c7" style="background:#f9a0a0">87883.42</span><span class="c8">86593.42</span><span class="c9">2026.01.29 10:09:47</span><span class="c10">87885.55</span><span class="c11">62.36</span><span class="c12">0.24 %</span></div>
<div class="row alt" style="top:843px"><i class="ic bu"></i><span class="c1">2026.01.29 18:47:51</span><span class="c2">btcusd</span><span class="c3">1438576787</span><span class="c4">buy</span><span class="c5">0.3</span><span class="c6" style="background:transparent">84682.61</span><span class="c7" style="background:#f9a0a0">84892.61</span><span class="c8">86177.25</span><span class="c9">2026.01.29 18:55:11</span><span class="c10">84881.47</span><span class="c11">59.66</span><span class="c12">0.23 %</span></div>
<div class="row wh" style="top:863px"><i class="ic se"></i><span class="c1">2026.01.29 19:31:55</span><span class="c2">btcusd</span><span class="c3">1438732237</span><span class="c4">sell</span><span class="c5">0.3</span><span class="c6" style="background:transparent">84884.63</span><span class="c7" style="background:#f9a0a0">84674.63</span><span class="c8">83373.97</span><span class="c9">2026.01.29 19:40:24</span><span class="c10">84688.68</span><span class="c11">58.79</span><span class="c12">0.23 %</span></div>
<div class="row alt" style="top:883px"><i class="ic bu"></i><span class="c1">2026.01.29 20:45:25</span><span class="c2">btcusd</span><span class="c3">1438949649</span><span class="c4">buy</span><span class="c5">0.3</span><span class="c6" style="background:transparent">83893.37</span><span class="c7" style="background:#f9a0a0">84103.37</span><span class="c8">85398.35</span><span class="c9">2026.01.29 21:33:31</span><span class="c10">84097.57</span><span class="c11">61.26</span><span class="c12">0.24 %</span></div>
<div class="row wh" style="top:903px"><i class="ic se"></i><span class="c1">2026.01.29 21:55:28</span><span class="c2">btcusd</span><span class="c3">1439139389</span><span class="c4">sell</span><span class="c5">0.3</span><span class="c6" style="background:transparent">84047.62</span><span class="c7" style="background:#f9a0a0">83837.62</span><span class="c8">82541.88</span><span class="c9">2026.01.29 22:01:18</span><span class="c10">83838.25</span><span class="c11">62.81</span><span class="c12">0.25 %</span></div>

<!-- summary -->
<div class="abs" style="left:17px;top:922px;width:1903px;height:21px;background:#c4c4c4"></div>
<svg width="40" height="943" viewBox="0 0 40 943" fill="none" style="z-index:3"><circle cx="27.500" cy="933" r="5" stroke="#222"/><path d="M25 933H30M27.500 930.500V935.500" stroke="#222"/></svg>
<div class="sm" style="left:39px">Profit: 555.03</div>
<div class="sm" style="left:122px">Credit: 0.00</div>
<div class="sm" style="left:192px">Deposit: 0.00</div>
<div class="sm" style="left:270px">Withdrawal: 0.00</div>
<div class="sm" style="left:371px">Balance: 555.03</div>
<div class="sm" style="left:1770px;width:46px;text-align:right">555.03</div>

</body>
</html>
